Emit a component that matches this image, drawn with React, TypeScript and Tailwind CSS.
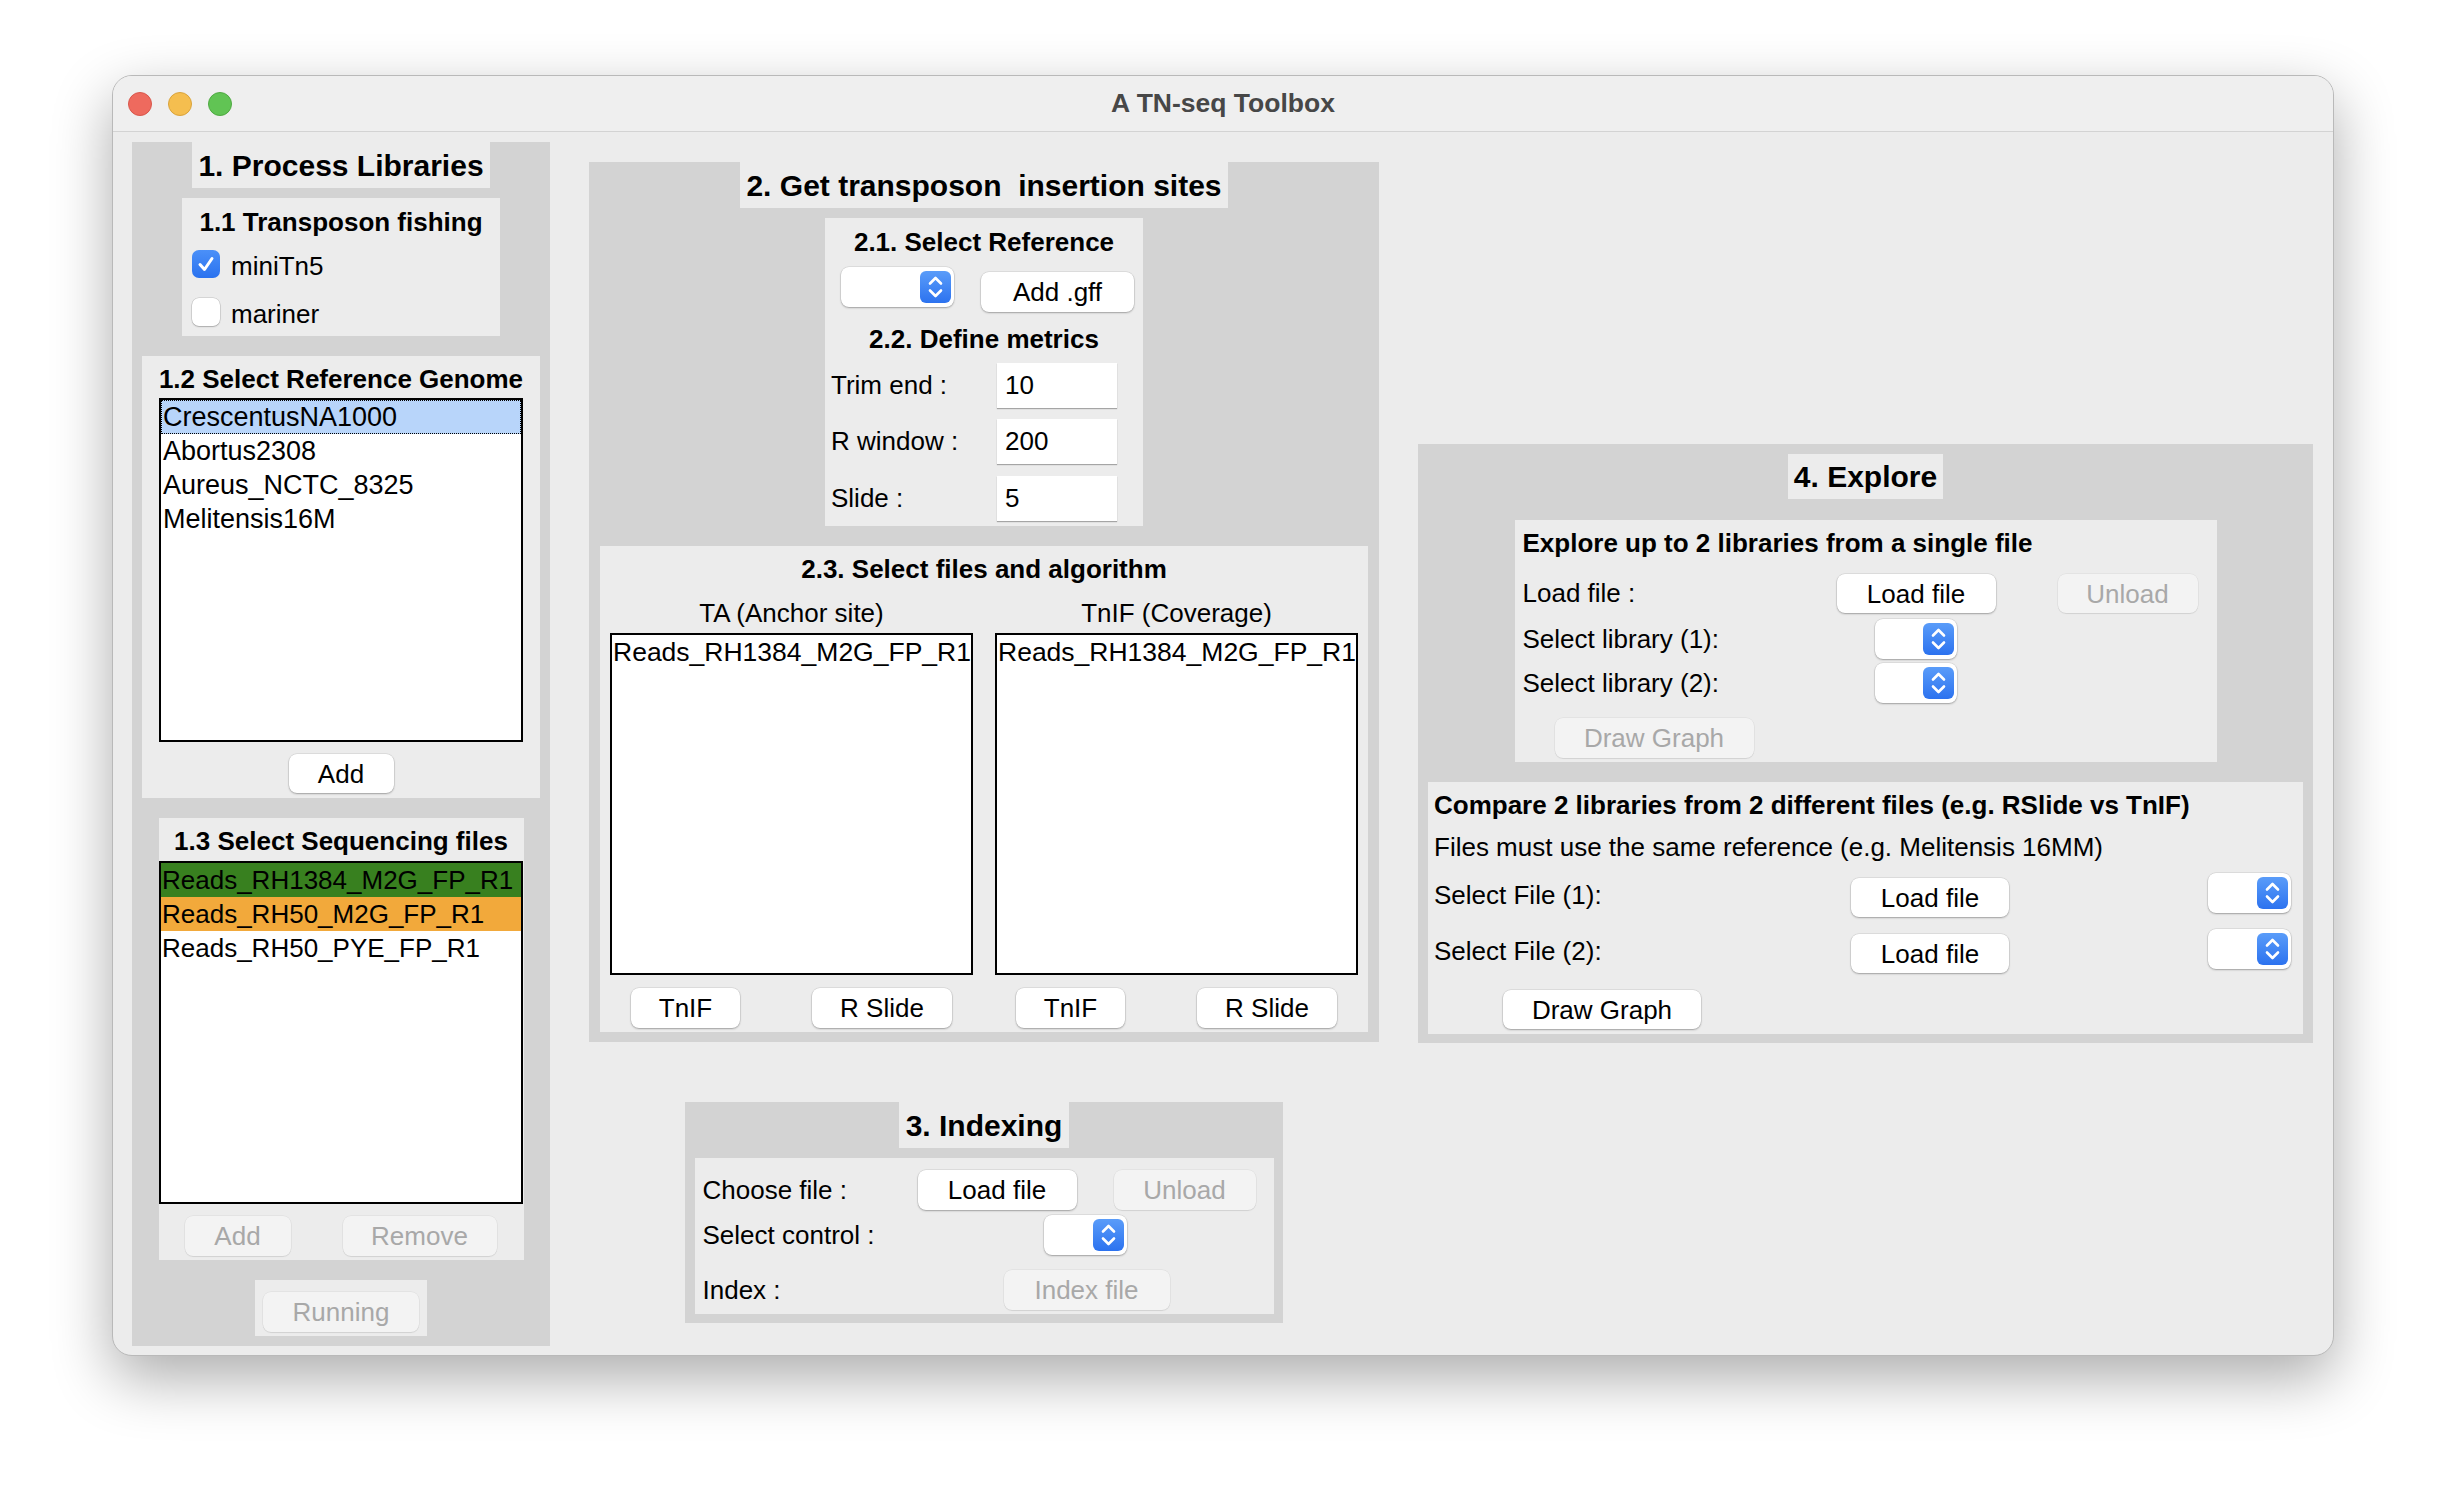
import React from "react";

function Btn({
  children,
  disabled,
  className,
}: {
  children: React.ReactNode;
  disabled?: boolean;
  className?: string;
}) {
  const base =
    "flex items-center justify-center rounded-[8px] text-[26px] leading-none shrink-0 ";
  const look = disabled
    ? "bg-[#f3f3f3] text-[#a8a8a8] shadow-[0_0_0_0.5px_rgba(0,0,0,0.07),0_1px_1px_rgba(0,0,0,0.08)]"
    : "bg-white text-black shadow-[0_0_0_0.5px_rgba(0,0,0,0.12),0_1px_2px_rgba(0,0,0,0.28)]";
  return <div className={base + look + " " + (className ?? "")}>{children}</div>;
}

function Dropdown({ className }: { className?: string }) {
  return (
    <div
      className={
        "flex items-center justify-end pr-[3px] rounded-[8px] bg-white shrink-0 shadow-[0_0_0_0.5px_rgba(0,0,0,0.12),0_1px_2px_rgba(0,0,0,0.28)] " +
        (className ?? "")
      }
    >
      <div className="w-[31px] h-[32px] rounded-[6px] bg-gradient-to-b from-[#5a9cf9] to-[#2c72ef] flex items-center justify-center">
        <svg width="31" height="32" viewBox="0 0 31 32">
          <path d="M10 12.5 L15.5 7 L21 12.5" stroke="white" strokeWidth="2.6" fill="none" strokeLinecap="round" strokeLinejoin="round" />
          <path d="M10 19.5 L15.5 25 L21 19.5" stroke="white" strokeWidth="2.6" fill="none" strokeLinecap="round" strokeLinejoin="round" />
        </svg>
      </div>
    </div>
  );
}

function Check({ checked }: { checked?: boolean }) {
  if (checked) {
    return (
      <div className="w-[28px] h-[28px] rounded-[7px] bg-gradient-to-b from-[#4b90f8] to-[#2a72ef] flex items-center justify-center shrink-0">
        <svg width="22" height="22" viewBox="0 0 22 22">
          <path d="M5 11.5 L9.5 16.5 L17 5.5" stroke="white" strokeWidth="3" fill="none" strokeLinecap="round" strokeLinejoin="round" />
        </svg>
      </div>
    );
  }
  return (
    <div className="w-[28px] h-[28px] rounded-[7px] bg-white shadow-[0_0_0_0.5px_rgba(0,0,0,0.18),0_1px_1.5px_rgba(0,0,0,0.2)] shrink-0" />
  );
}

function Input({ value }: { value: string }) {
  return (
    <div className="w-[120px] h-[45px] bg-white shadow-[0_1px_1px_rgba(0,0,0,0.3)] flex items-center pl-[8px] text-[26px]">
      {value}
    </div>
  );
}

export default function App() {
  return (
    <div className="min-h-screen w-full bg-white pt-[75px] pl-[112px] font-['Liberation_Sans',Arial,sans-serif] text-black">
      <div className="w-[2222px] h-[1281px] rounded-[20px] bg-[#ececec] border border-[#b9b9b9] shadow-[0_22px_60px_rgba(0,0,0,0.33)] overflow-hidden flex flex-col">
        {/* Title bar */}
        <div className="h-[56px] shrink-0 bg-[#efefef] border-b border-[#d3d3d3] grid grid-cols-[1fr_auto_1fr] items-center">
          <div className="flex items-center pl-[15px] gap-[16px]">
            <div className="w-[24px] h-[24px] rounded-full bg-[#ee6a5e] border border-[#d8574c]" />
            <div className="w-[24px] h-[24px] rounded-full bg-[#f5be4f] border border-[#d9a33c]" />
            <div className="w-[24px] h-[24px] rounded-full bg-[#61c454] border border-[#4fa942]" />
          </div>
          <div className="text-[26.5px] font-bold text-[#474747]">A TN-seq Toolbox</div>
          <div />
        </div>

        {/* Content */}
        <div className="flex-1 flex items-start pl-[19px]">
          {/* Column 1 */}
          <div className="mt-[10px] w-[418px] h-[1204px] bg-[#d3d3d3] flex flex-col items-center shrink-0">
            <div className="w-[298px] h-[46px] bg-[#ececec] flex items-center justify-center text-[30px] font-bold">
              1. Process Libraries
            </div>
            <div className="mt-[10px] w-[318px] h-[138px] bg-[#ececec] flex flex-col">
              <div className="mt-[8px] h-[32px] flex items-center justify-center text-[26px] font-bold">
                1.1 Transposon fishing
              </div>
              <div className="mt-[12px] ml-[10px] h-[28px] flex items-center">
                <Check checked />
                <span className="ml-[11px] text-[26px] mt-[5px]">miniTn5</span>
              </div>
              <div className="mt-[20px] ml-[10px] h-[28px] flex items-center">
                <Check />
                <span className="ml-[11px] text-[26px] mt-[5px]">mariner</span>
              </div>
            </div>

            <div className="mt-[20px] w-[398px] h-[442px] bg-[#ececec] flex flex-col items-center">
              <div className="mt-[7px] h-[32px] flex items-center justify-center text-[26px] font-bold">
                1.2 Select Reference Genome
              </div>
              <div className="mt-[3px] w-[364px] h-[344px] border-2 border-black bg-white text-[27px] leading-[34px]">
                <div className="h-[34px] bg-[#b8d5fa] border border-dotted border-black pl-[1px] leading-[32px]">
                  CrescentusNA1000
                </div>
                <div className="h-[34px] pl-[2px]">Abortus2308</div>
                <div className="h-[34px] pl-[2px]">Aureus_NCTC_8325</div>
                <div className="h-[34px] pl-[2px]">Melitensis16M</div>
              </div>
              <Btn className="mt-[12px] w-[105px] h-[39px]">Add</Btn>
            </div>

            <div className="mt-[20px] w-[365px] h-[442px] bg-[#ececec] flex flex-col items-center">
              <div className="mt-[7px] h-[32px] flex items-center justify-center text-[26px] font-bold">
                1.3 Select Sequencing files
              </div>
              <div className="mt-[4px] w-[364px] h-[343px] border-2 border-black bg-white text-[26px] leading-[34px]">
                <div className="h-[34px] bg-[#38801f] pl-[1px]">Reads_RH1384_M2G_FP_R1</div>
                <div className="h-[34px] bg-[#f2a93b] pl-[1px]">Reads_RH50_M2G_FP_R1</div>
                <div className="h-[34px] pl-[1px]">Reads_RH50_PYE_FP_R1</div>
              </div>
              <div className="mt-[12px] w-full flex pl-[26px]">
                <Btn disabled className="w-[106px] h-[40px]">Add</Btn>
                <Btn disabled className="ml-[52px] w-[154px] h-[40px]">Remove</Btn>
              </div>
            </div>

            <div className="mt-[20px] w-[172px] h-[56px] bg-[#ececec] flex justify-center pt-[12px]">
              <Btn disabled className="w-[156px] h-[40px]">Running</Btn>
            </div>
          </div>

          {/* Column 2 */}
          <div className="ml-[39px] w-[790px] flex flex-col items-center shrink-0">
            <div className="mt-[30px] w-[790px] h-[880px] bg-[#d3d3d3] flex flex-col items-center">
              <div className="w-[488px] h-[46px] bg-[#ececec] flex items-center justify-center text-[30px] font-bold whitespace-pre">
                {"2. Get transposon  insertion sites"}
              </div>
              <div className="mt-[10px] w-[318px] h-[308px] bg-[#ececec] flex flex-col">
                <div className="mt-[8px] h-[32px] flex items-center justify-center text-[26px] font-bold">
                  2.1. Select Reference
                </div>
                <div className="mt-[9px] flex items-start">
                  <Dropdown className="ml-[16px] w-[113px] h-[40px]" />
                  <Btn className="ml-[27px] mt-[5px] w-[153px] h-[40px]">Add .gff</Btn>
                </div>
                <div className="mt-[11px] h-[32px] flex items-center justify-center text-[26px] font-bold">
                  2.2. Define metrics
                </div>
                <div className="mt-[8px] h-[45px] flex items-center">
                  <span className="pl-[6px] w-[172px] text-[26px]">Trim end :</span>
                  <Input value="10" />
                </div>
                <div className="mt-[11px] h-[45px] flex items-center">
                  <span className="pl-[6px] w-[172px] text-[26px]">R window :</span>
                  <Input value="200" />
                </div>
                <div className="mt-[12px] h-[45px] flex items-center">
                  <span className="pl-[6px] w-[172px] text-[26px]">Slide :</span>
                  <Input value="5" />
                </div>
              </div>

              <div className="mt-[20px] w-[768px] h-[486px] bg-[#ececec] flex flex-col">
                <div className="mt-[7px] h-[32px] flex items-center justify-center text-[26px] font-bold">
                  2.3. Select files and algorithm
                </div>
                <div className="mt-[12px] flex pl-[10px] gap-[22px]">
                  {["TA (Anchor site)", "TnIF (Coverage)"].map((h) => (
                    <div key={h} className="w-[363px] flex flex-col">
                      <div className="h-[32px] flex items-center justify-center text-[26px]">{h}</div>
                      <div className="mt-[4px] h-[342px] border-2 border-black bg-white overflow-hidden">
                        <div className="w-[359px] h-[34px] leading-[34px] text-[26.5px] whitespace-nowrap overflow-hidden pl-[1px]">
                          Reads_RH1384_M2G_FP_R1,
                        </div>
                      </div>
                      <div className="mt-[13px] flex justify-between px-[21px]">
                        <Btn className="w-[109px] h-[40px]">TnIF</Btn>
                        <Btn className="w-[140px] h-[40px]">R Slide</Btn>
                      </div>
                    </div>
                  ))}
                </div>
              </div>
            </div>

            <div className="mt-[60px] w-[598px] h-[221px] bg-[#d3d3d3] flex flex-col items-center">
              <div className="w-[170px] h-[46px] bg-[#ececec] flex items-center justify-center text-[30px] font-bold">
                3. Indexing
              </div>
              <div className="mt-[10px] w-[579px] h-[156px] bg-[#ececec] flex flex-col pt-[12px] pl-[8px]">
                <div className="h-[40px] flex items-center">
                  <span className="w-[215px] text-[26px]">Choose file :</span>
                  <Btn className="w-[159px] h-[40px]">Load file</Btn>
                  <Btn disabled className="ml-[37px] w-[142px] h-[40px]">Unload</Btn>
                </div>
                <div className="mt-[5px] h-[40px] flex items-center">
                  <span className="w-[341px] text-[26px]">Select control :</span>
                  <Dropdown className="w-[83px] h-[40px]" />
                </div>
                <div className="mt-[15px] h-[40px] flex items-center">
                  <span className="w-[301px] text-[26px]">Index :</span>
                  <Btn disabled className="w-[166px] h-[40px]">Index file</Btn>
                </div>
              </div>
            </div>
          </div>

          {/* Column 3 */}
          <div className="ml-[39px] mt-[312px] w-[895px] h-[599px] bg-[#d3d3d3] flex flex-col items-center shrink-0">
            <div className="mt-[10px] w-[155px] h-[45px] bg-[#ececec] flex items-center justify-center text-[30px] font-bold">
              4. Explore
            </div>
            <div className="mt-[21px] w-[702px] h-[242px] bg-[#ececec] flex flex-col pl-[8px]">
              <div className="mt-[7px] h-[32px] flex items-center text-[26px] font-bold">
                Explore up to 2 libraries from a single file
              </div>
              <div className="mt-[15px] h-[39px] flex items-center">
                <span className="w-[314px] text-[26px]">Load file :</span>
                <Btn className="w-[159px] h-[39px]">Load file</Btn>
                <Btn disabled className="ml-[62px] w-[140px] h-[39px]">Unload</Btn>
              </div>
              <div className="mt-[6px] h-[40px] flex items-center">
                <span className="w-[352px] text-[26px]">Select library (1):</span>
                <Dropdown className="w-[82px] h-[40px]" />
              </div>
              <div className="mt-[4px] h-[40px] flex items-center">
                <span className="w-[352px] text-[26px]">Select library (2):</span>
                <Dropdown className="w-[82px] h-[40px]" />
              </div>
              <Btn disabled className="mt-[15px] ml-[32px] w-[199px] h-[40px]">Draw Graph</Btn>
            </div>

            <div className="mt-[20px] w-[875px] h-[252px] bg-[#ececec] flex flex-col pl-[6px]">
              <div className="mt-[7px] h-[32px] flex items-center text-[26px] font-bold">
                Compare 2 libraries from 2 different files (e.g. RSlide vs TnIF)
              </div>
              <div className="mt-[10px] h-[32px] flex items-center text-[26px]">
                Files must use the same reference (e.g. Melitensis 16MM)
              </div>
              <div className="mt-[10px] h-[44px] flex">
                <span className="w-[417px] self-center text-[26px]">Select File (1):</span>
                <Btn className="self-end w-[158px] h-[39px]">Load file</Btn>
                <Dropdown className="self-start ml-[199px] w-[83px] h-[40px]" />
              </div>
              <div className="mt-[12px] h-[44px] flex">
                <span className="w-[417px] self-center text-[26px]">Select File (2):</span>
                <Btn className="self-end w-[158px] h-[39px]">Load file</Btn>
                <Dropdown className="self-start ml-[199px] w-[83px] h-[40px]" />
              </div>
              <Btn className="mt-[17px] ml-[69px] w-[198px] h-[39px]">Draw Graph</Btn>
            </div>
          </div>
        </div>
      </div>
    </div>
  );
}
